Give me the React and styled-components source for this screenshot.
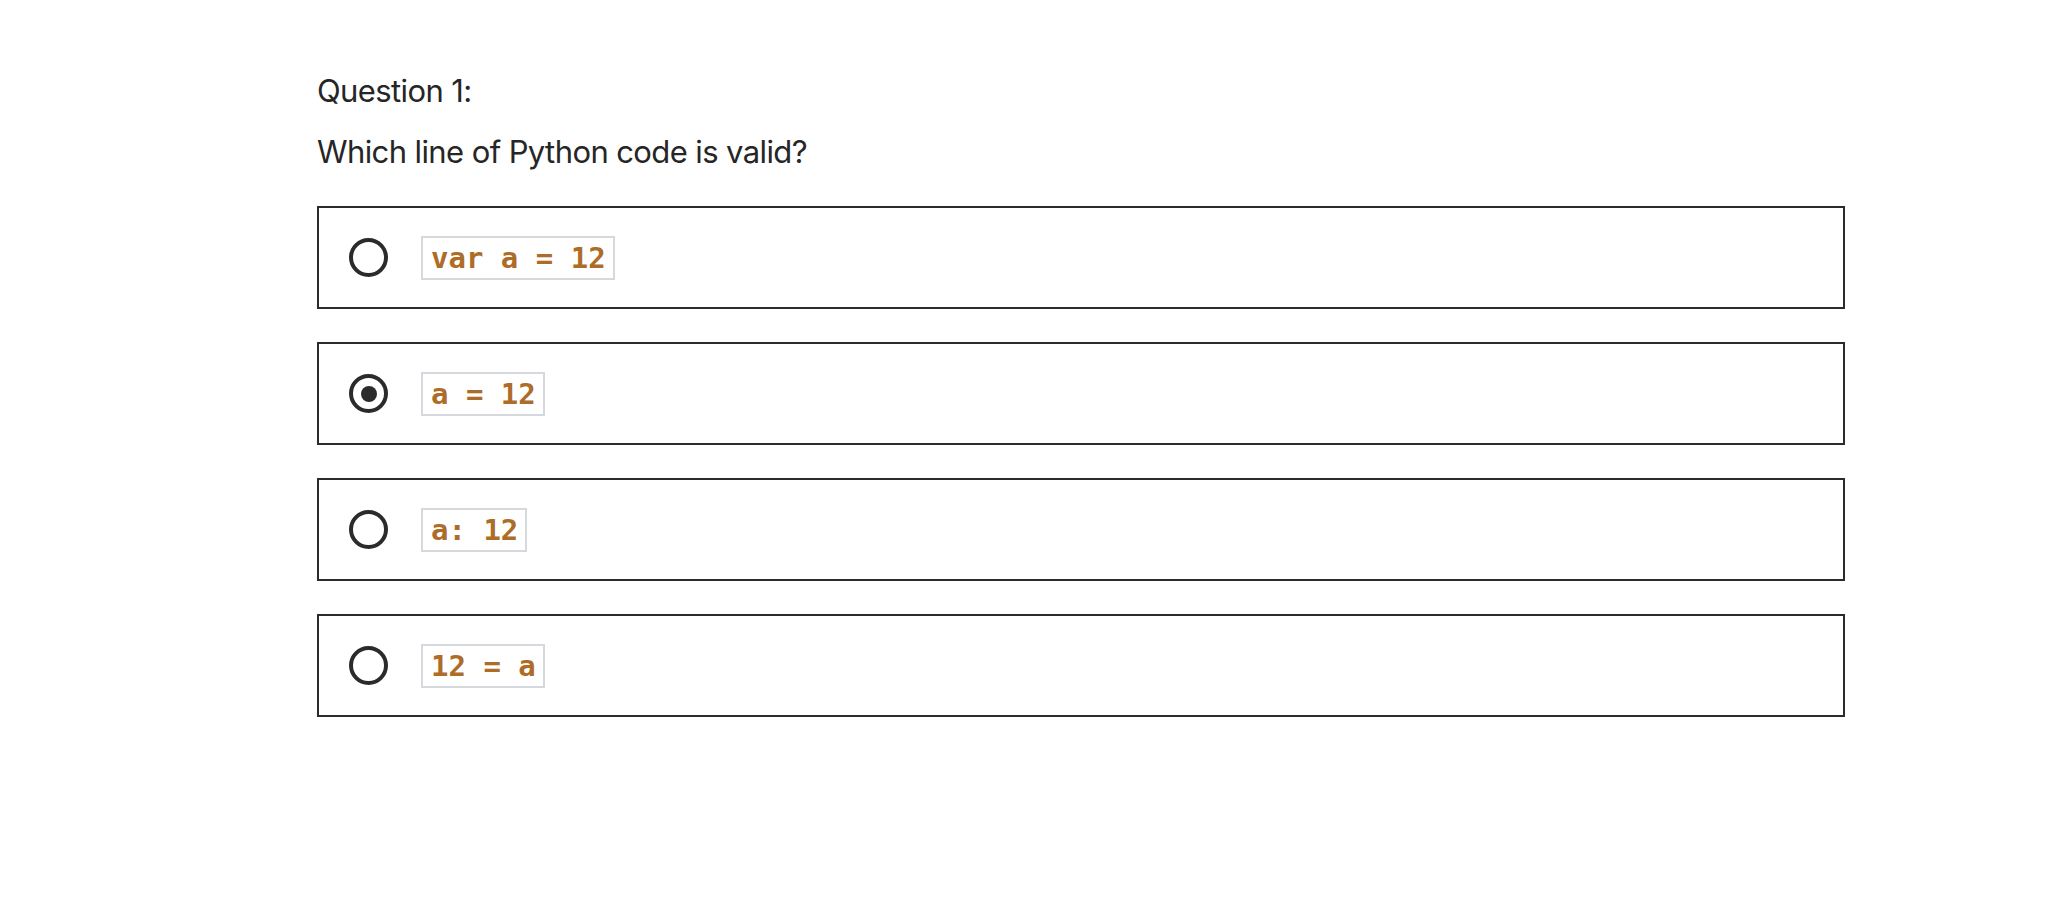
import React, { useState } from 'react';
import styled, { createGlobalStyle } from 'styled-components';

const GlobalStyle = createGlobalStyle`
  html, body {
    margin: 0;
    padding: 0;
    background: #ffffff;
  }
  body {
    font-family: Inter, "Noto Sans", "Liberation Sans", sans-serif;
    color: #262626;
  }
`;

const Page = styled.div`
  padding: 71px 0 0 317px;
  width: 1528px;
`;

const QuestionLabel = styled.div`
  font-size: 31px;
  line-height: 40px;
  letter-spacing: -0.6px;
  color: #262626;
`;

const Prompt = styled.div`
  font-size: 31px;
  line-height: 40px;
  letter-spacing: -0.6px;
  margin-top: 21px;
  color: #262626;
`;

const Options = styled.div`
  display: flex;
  flex-direction: column;
  gap: 33px;
  margin-top: 34px;
`;

const Option = styled.label`
  display: flex;
  align-items: center;
  gap: 33px;
  height: 103px;
  box-sizing: border-box;
  padding-left: 30px;
  border: 2px solid #2b2b2b;
  cursor: pointer;
`;

const Radio = styled.span`
  width: 39px;
  height: 39px;
  box-sizing: border-box;
  border: 4px solid #2b2b2b;
  border-radius: 50%;
  display: flex;
  align-items: center;
  justify-content: center;
  flex: none;

  &::after {
    content: '';
    width: 16px;
    height: 16px;
    border-radius: 50%;
    background: #2b2b2b;
    display: ${(p) => (p.$checked ? 'block' : 'none')};
  }
`;

const Code = styled.code`
  font-family: "DejaVu Sans Mono", "Liberation Mono", monospace;
  font-weight: bold;
  font-size: 29px;
  line-height: 38px;
  color: #ad6c28;
  padding: 1px 7px 1px 8px;
  border: 2px solid #d5d9dd;
  white-space: pre;
`;

const answers = ['var a = 12', 'a = 12', 'a: 12', '12 = a'];

export default function App() {
  const [selected, setSelected] = useState(1);

  return (
    <>
      <GlobalStyle />
      <Page>
        <QuestionLabel>Question 1:</QuestionLabel>
        <Prompt>Which line of Python code is valid?</Prompt>
        <Options>
          {answers.map((text, i) => (
            <Option key={text} onClick={() => setSelected(i)}>
              <Radio $checked={selected === i} />
              <Code>{text}</Code>
            </Option>
          ))}
        </Options>
      </Page>
    </>
  );
}
